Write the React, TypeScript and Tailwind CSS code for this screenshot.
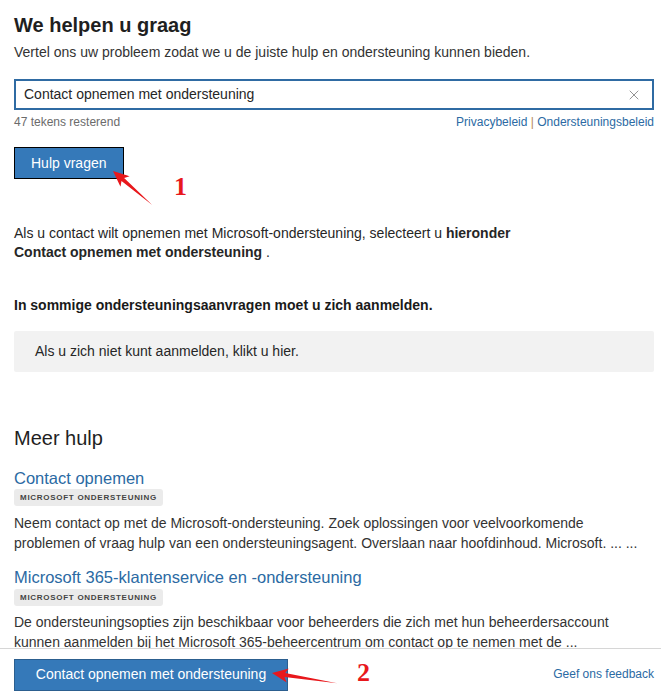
import { X } from 'lucide-react';

const Tag = () => (
  <span className="flex items-center h-[17px] bg-[#ebebeb] rounded-[3px] px-[6px] text-[8px] leading-[11px] font-bold tracking-[0.09em] text-[#444]">
    MICROSOFT ONDERSTEUNING
  </span>
);

const Arrow = ({ className, rotate, length }: { className: string; rotate: number; length: number }) => (
  <svg
    className={className}
    width={length}
    height={14}
    viewBox={`0 0 ${length} 14`}
    style={{ transform: `rotate(${rotate}deg)`, transformOrigin: '0 7px' }}
  >
    <polygon points={`0,7 16,0 13,5 ${length},7 13,9 16,14`} fill="#e8181c" />
  </svg>
);

const App = () => {
  return (
    <div
      className="relative w-[661px] h-[700px] bg-white text-[#262626] overflow-hidden"
      style={{ fontFamily: '"Liberation Sans", Arial, sans-serif' }}
    >
      <div className="pl-[14px] pr-[7px] pt-[12px]">
        <h1 className="text-[20px] leading-[26px] font-bold text-[#1f1f1f]">We helpen u graag</h1>
        <p className="mt-[5px] text-[14px] leading-[18px] text-[#333]">
          Vertel ons uw probleem zodat we u de juiste hulp en ondersteuning kunnen bieden.
        </p>

        <div className="mt-[18px] h-[31px] border-2 border-[#2f6ba3] flex items-center pl-[8px] pr-[10px]">
          <span className="flex-1 text-[14px] text-[#262626]">Contact opnemen met ondersteuning</span>
          <X size={16} strokeWidth={1.2} className="text-[#777]" />
        </div>
        <div className="mt-[5px] flex justify-between text-[12px] leading-[14px]">
          <span className="text-[#6b6b6b]">47 tekens resterend</span>
          <span className="text-[#2b6aa3]">
            Privacybeleid <span className="text-[#b58a60]">|</span> Ondersteuningsbeleid
          </span>
        </div>

        <button className="mt-[18px] h-[32px] px-[16px] bg-[#3579b9] border border-black text-white text-[14px]">
          Hulp vragen
        </button>

        <p className="mt-[45px] text-[14px] leading-[19px] text-[#262626]">
          Als u contact wilt opnemen met Microsoft-ondersteuning, selecteert u <b>hieronder</b>
          <br />
          <b>Contact opnemen met ondersteuning</b> .
        </p>

        <p className="mt-[34px] text-[14px] leading-[18px] font-bold text-[#1a1a1a]">
          In sommige ondersteuningsaanvragen moet u zich aanmelden.
        </p>

        <div className="mt-[17px] h-[41px] bg-[#f2f2f2] rounded-[2px] flex items-center pl-[21px] text-[14px] text-[#262626]">
          Als u zich niet kunt aanmelden, klikt u hier.
        </div>

        <h2 className="mt-[54px] text-[20px] leading-[24px] text-[#1f1f1f]">Meer hulp</h2>

        <div className="mt-[18px]">
          <a className="block text-[16.5px] leading-[20px] text-[#2b6aa3]">Contact opnemen</a>
          <div className="mt-[1px] flex">
            <Tag />
          </div>
          <p className="mt-[7px] text-[14px] leading-[20px] text-[#333]">
            Neem contact op met de Microsoft-ondersteuning. Zoek oplossingen voor veelvoorkomende
            <br />
            problemen of vraag hulp van een ondersteuningsagent. Overslaan naar hoofdinhoud. Microsoft. ... ...
          </p>
        </div>

        <div className="mt-[14px]">
          <a className="block text-[16.5px] leading-[20px] text-[#2b6aa3]">Microsoft 365-klantenservice en -ondersteuning</a>
          <div className="mt-[2px] flex">
            <Tag />
          </div>
          <p className="mt-[6px] text-[14px] leading-[20px] text-[#333]">
            De ondersteuningsopties zijn beschikbaar voor beheerders die zich met hun beheerdersaccount
            <br />
            kunnen aanmelden bij het Microsoft 365-beheercentrum om contact op te nemen met de ...
          </p>
        </div>
      </div>

      <div className="absolute left-0 right-0 bottom-0 h-[52px] bg-white border-t border-[#d6d6d6] flex items-center justify-between pl-[14px] pr-[7px]">
        <button className="h-[32px] w-[274px] bg-[#3579b9] border border-[#2c5f8f] text-white text-[14px]">
          Contact opnemen met ondersteuning
        </button>
        <a className="mb-[2px] text-[12px] text-[#2b6aa3]">Geef ons feedback</a>
      </div>

      <Arrow className="absolute left-[113px] top-[164px]" rotate={41} length={52} />
      <span className="absolute left-[174px] top-[172px] text-[26px] leading-[30px] font-bold text-[#e8181c]" style={{ fontFamily: '"Liberation Serif", serif' }}>
        1
      </span>

      <Arrow className="absolute left-[272px] top-[666px]" rotate={9} length={66} />
      <span className="absolute left-[357px] top-[658px] text-[26px] leading-[30px] font-bold text-[#e8181c]" style={{ fontFamily: '"Liberation Serif", serif' }}>
        2
      </span>
    </div>
  );
};

export default App;
